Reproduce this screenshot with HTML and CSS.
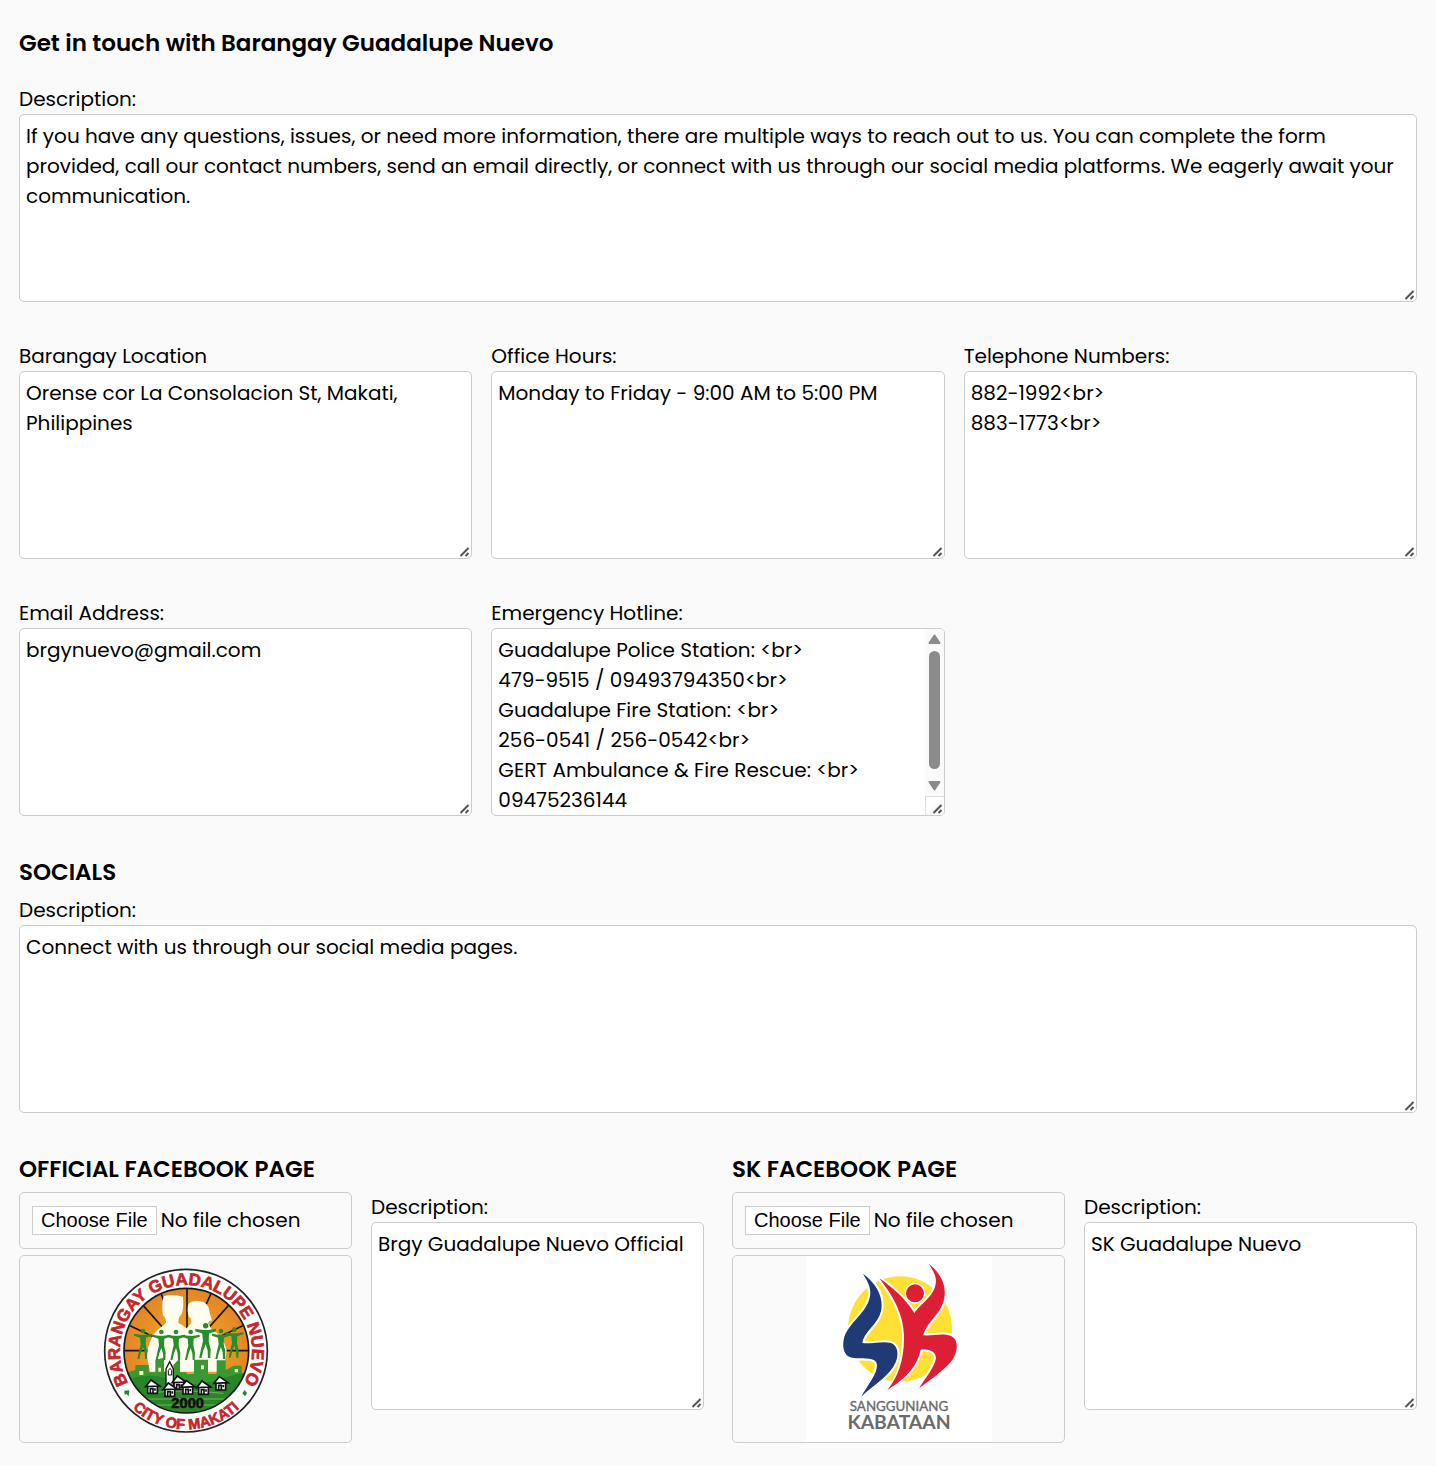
FILE: index.html
```html
<!DOCTYPE html>
<html lang="en">
<head>
<meta charset="utf-8">
<meta name="viewport" content="width=device-width, initial-scale=1">
<title>Contact Page Settings</title>
<link rel="stylesheet" href="styles.css">
</head>
<body>
<form class="contact-form">
  <h2 class="heading heading-main">Get in touch with Barangay Guadalupe Nuevo</h2>

  <div class="field">
    <label for="contact-desc">Description:</label>
    <textarea id="contact-desc">If you have any questions, issues, or need more information, there are multiple ways to reach out to us. You can complete the form provided, call our contact numbers, send an email directly, or connect with us through our social media platforms. We eagerly await your communication.</textarea>
  </div>

  <div class="details">
    <div class="field">
      <label for="location">Barangay Location</label>
      <textarea id="location">Orense cor La Consolacion St, Makati, Philippines</textarea>
    </div>
    <div class="field">
      <label for="hours">Office Hours:</label>
      <textarea id="hours">Monday to Friday - 9:00 AM to 5:00 PM</textarea>
    </div>
    <div class="field">
      <label for="phones">Telephone Numbers:</label>
      <textarea id="phones">882-1992&lt;br&gt;
883-1773&lt;br&gt;</textarea>
    </div>
    <div class="field">
      <label for="email">Email Address:</label>
      <textarea id="email">brgynuevo@gmail.com</textarea>
    </div>
    <div class="field">
      <label for="hotline">Emergency Hotline:</label>
      <div class="scroll-box">
        <textarea id="hotline" class="scrolling">Guadalupe Police Station: &lt;br&gt;
479-9515 / 09493794350&lt;br&gt;
Guadalupe Fire Station: &lt;br&gt;
256-0541 / 256-0542&lt;br&gt;
GERT Ambulance &amp; Fire Rescue: &lt;br&gt;
09475236144</textarea>
        <svg class="scrollbar" viewBox="0 0 19 186" aria-hidden="true">
          <path d="M0 0H19V186H0Z" fill="#fafafa"/>
          <path d="M9.500 6.500L14.500 14H4.500Z" fill="#8b8b8b" stroke="#8b8b8b" stroke-width="2" stroke-linejoin="round"/>
          <rect x="4" y="22" width="11" height="118" rx="5.500" fill="#8b8b8b"/>
          <path d="M9.500 160.500L14.500 153H4.500Z" fill="#8b8b8b" stroke="#8b8b8b" stroke-width="2" stroke-linejoin="round"/>
          <path d="M0.500 186V167.500H19" fill="#fff" stroke="#ddd"/>
          <path d="M8.500 184L16.500 176M13.500 184L16.500 181" fill="none" stroke="#555" stroke-width="2"/>
        </svg>
      </div>
    </div>
  </div>

  <section class="section">
    <h2 class="heading">SOCIALS</h2>
    <div class="field">
      <label for="social-desc">Description:</label>
      <textarea id="social-desc">Connect with us through our social media pages.</textarea>
    </div>
  </section>

  <div class="pages">
    <section class="section">
      <h2 class="heading">OFFICIAL FACEBOOK PAGE</h2>
      <div class="page-row">
        <div class="upload">
          <input class="file" type="file" aria-label="Official page logo">
          <div class="preview">
            <svg class="logo" viewBox="9 3 558 558" role="img" aria-label="Barangay Guadalupe Nuevo seal">
              <defs>
                <path id="arc-top" d="M288 486A198 198 0 0 1 288 90A198 198 0 0 1 288 486"/>
                <path id="arc-bottom" d="M53 288A235 235 0 0 0 523 288"/>
                <clipPath id="disc"><circle cx="289" cy="287" r="186"/></clipPath>
                <radialGradient id="glow"><stop offset="0" stop-color="#f3b51f"/><stop offset="1" stop-color="#e38428"/></radialGradient>
                <g id="person">
                  <circle cx="0" cy="-44" r="7"/>
                  <path d="M-27-36L-8-33H8L27-36V-30L9-24L8-4L13 18L12 40H6L5 20L0 4L-6 20L-11 40H-17L-12 16L-7-4L-9-24L-27-30Z"/>
                </g>
                <g id="house" stroke="#111" stroke-width="5" fill="#fff">
                  <path d="M-14 0V22H15V0"/><path d="M-20 2L-4-18L22 0Z"/><path d="M-6 22V8H2V22M8 7V14" fill="none"/>
                </g>
              </defs>
              <circle cx="288" cy="287" r="244" fill="#fff" stroke="#222" stroke-width="5"/>
              <g clip-path="url(#disc)">
                <rect x="100" y="98" width="380" height="380" fill="url(#glow)"/>
                <path d="M291 98V260M213 116L250 205M160 152L225 225M120 212L200 250M102 287H200M363 116L320 210M415 152L350 225M458 212L380 250M480 287H380" stroke="#1c1607" stroke-width="5"/>
                <path d="M221 124Q246 116 279 125Q282 160 275 177Q264 188 265 203L290 220L303 205L302 190Q290 184 294 150Q300 136 328 138Q356 142 358 168Q362 185 366 196Q358 196 354 205L366 224Q398 240 410 285L400 350H180L170 300Q180 240 210 219L228 204Q229 191 219 181Q214 150 221 124Z" fill="#fffef0"/>
                <path d="M100 355L136 345V330H176V352H196V314L222 308V350H250V330L270 310V352H290V357H312V314H354V357H380V316H407V345L432 332H455V356H480V480H100Z" fill="#3a9833"/>
                <path d="M110 374Q180 350 240 374T360 380T480 350V480H110Z" fill="#298528"/>
                <path d="M148 348h12v12h-12zM205 338h8v12h-8zM333 331h9v12h-9zM434 342h10v10h-10z" fill="#eff3b6"/>
                <g fill="#288e2c">
                  <use href="#person" x="159" y="272"/><use href="#person" x="214" y="275"/><use href="#person" x="258" y="275"/><use href="#person" x="302" y="275"/><use href="#person" x="393" y="272"/><use href="#person" x="433" y="268"/>
                  <use href="#person" transform="translate(347 263) scale(1.15)"/>
                </g>
                <path d="M182 415Q260 400 400 415M170 432H405M190 450H390" stroke="#76b45b" stroke-width="3" fill="none"/>
                <path d="M228 400V342L239 320L250 342V390" fill="#fff" stroke="#151515" stroke-width="4"/><path d="M235 360V346L240 340L245 346V360Z" fill="#fff" stroke="#111" stroke-width="3"/>
                <use href="#house" x="187" y="393"/><use href="#house" x="266" y="381"/><use href="#house" x="239" y="402"/><use href="#house" x="293" y="395"/><use href="#house" x="340" y="396"/><use href="#house" x="392" y="383"/>
              </g>
              <circle cx="289" cy="287" r="187" fill="none" stroke="#171717" stroke-width="5"/>
              <g class="seal-text">
                <text class="seal-name"><textPath href="#arc-top" startOffset="50%">BARANGAY GUADALUPE NUEVO</textPath></text>
                <text class="seal-city"><textPath href="#arc-bottom" startOffset="50%">CITY OF MAKATI</textPath></text>
                <text class="seal-year" x="293" y="460">2000</text>
              </g>
              <path d="M103 407L118 406L116 424L110 417L104 419ZM464 405L471 414L465 424L457 415Z" fill="#27813b"/>
            </svg>
          </div>
        </div>
        <div class="field">
          <label for="official-desc">Description:</label>
          <textarea id="official-desc">Brgy Guadalupe Nuevo Official</textarea>
        </div>
      </div>
    </section>

    <section class="section">
      <h2 class="heading">SK FACEBOOK PAGE</h2>
      <div class="page-row">
        <div class="upload">
          <input class="file" type="file" aria-label="SK page logo">
          <div class="preview">
            <svg class="logo logo-white" viewBox="18 3 558 558" role="img" aria-label="Sangguniang Kabataan logo">
              <ellipse cx="300" cy="222" rx="156" ry="158" fill="#ffe135"/>
              <g stroke="#fff" stroke-width="12" stroke-linejoin="round">
                <path id="sk-s" d="M189 56C224 82 246 116 245 153C243 205 194 224 187 264C218 268 246 257 273 264C294 272 297 299 287 322C270 363 220 390 184 425C201 391 232 359 231 329C227 302 183 316 151 307C132 299 127 279 131 254C141 202 210 171 211 113C211 91 199 73 189 56Z"/>
                <path id="sk-k" d="M238 70C279 98 317 132 343 174C367 140 405 125 408 78C408 59 396 42 386 26C418 51 437 84 434 121C428 179 382 194 370 241C403 244 446 228 465 253C479 280 463 312 442 332C416 357 385 378 357 400C374 371 404 338 408 309C407 287 385 282 362 284C350 342 307 376 262 405C295 366 313 310 312 246C312 177 277 121 238 70Z"/>
              </g>
              <use href="#sk-s" fill="#203a75"/>
              <use href="#sk-k" fill="#dd1f35"/>
              <circle cx="345" cy="115" r="31" fill="#fff"/><circle cx="345" cy="115" r="27" fill="#dd1f35"/>
              <g class="sk-text">
                <text class="sk-small" x="297" y="468">SANGGUNIANG</text>
                <text class="sk-large" x="297" y="521">KABATAAN</text>
              </g>
            </svg>
          </div>
        </div>
        <div class="field">
          <label for="sk-desc">Description:</label>
          <textarea id="sk-desc">SK Guadalupe Nuevo</textarea>
        </div>
      </div>
    </section>
  </div>
</form>
</body>
</html>
```
FILE: styles.css
```css
* {
  box-sizing: border-box;
}

body {
  margin: 0;
  background: #fafafa;
  color: #000;
  font: 20px/30px Poppins, Inter, sans-serif;
}

.contact-form {
  display: flex;
  flex-direction: column;
  gap: 39px;
  padding: 26px 19px 23px;
}

.heading {
  margin: 0;
  font-size: 23px;
  line-height: 34px;
  font-weight: 600;
}

.heading-main {
  margin-bottom: -15px;
}

.section {
  display: flex;
  flex-direction: column;
  gap: 6px;
}

.field {
  display: flex;
  flex-direction: column;
  min-width: 0;
}

textarea {
  display: block;
  width: 100%;
  height: 188px;
  margin: 0;
  padding: 6px;
  border: 1px solid #ccc;
  border-radius: 5px;
  background: #fff url("data:image/svg+xml,%3Csvg xmlns='http://www.w3.org/2000/svg' width='12' height='12'%3E%3Cpath d='M1.500 10L9.500 2M6.500 10L9.500 7' stroke='%23555' stroke-width='2' fill='none'/%3E%3C/svg%3E") right bottom no-repeat;
  color: #000;
  font: inherit;
  resize: both;
}

textarea::-webkit-resizer {
  display: none;
}

.details {
  display: grid;
  grid-template-columns: repeat(3, 1fr);
  gap: 39px 19px;
}

.scroll-box {
  position: relative;
}

.scrolling {
  padding-right: 24px;
  scrollbar-width: none;
}

.scrollbar {
  position: absolute;
  top: 1px;
  right: 1px;
  width: 19px;
  height: 186px;
  border-radius: 0 4px 4px 0;
  pointer-events: none;
}

.pages {
  display: grid;
  grid-template-columns: repeat(2, 1fr);
  gap: 28px;
}

.page-row {
  display: grid;
  grid-template-columns: repeat(2, 1fr);
  gap: 19px;
}

.upload {
  display: flex;
  flex-direction: column;
  gap: 6px;
  min-width: 0;
}

.file {
  width: 100%;
  height: 57px;
  padding: 12px;
  border: 1px solid #ccc;
  border-radius: 5px;
  color: #000;
  font: inherit;
}

.file::file-selector-button {
  margin-right: 4px;
  padding: 2px 8px;
  border: 1px solid #ccc;
  background: #fff;
  color: #000;
  font: 20px "Liberation Sans", Arial, sans-serif;
}

.preview {
  display: flex;
  justify-content: center;
  border: 1px solid #ccc;
  border-radius: 5px;
}

.logo {
  display: block;
  width: 186px;
  height: 186px;
}

.logo-white {
  background: #fff;
}

.seal-text {
  font-family: "Liberation Sans", Arial, sans-serif;
  font-weight: 700;
  text-anchor: middle;
  fill: #c5262b;
  stroke: #c5262b;
  stroke-width: 2px;
}

.seal-name {
  font-size: 51px;
}

.seal-city {
  font-size: 44px;
}

.seal-year {
  font-size: 44px;
  fill: #111;
  stroke: #111;
}

.sk-text {
  font-family: Lato, sans-serif;
  text-anchor: middle;
  fill: #6b6b6b;
}

.sk-small {
  font-size: 40px;
  stroke: #6b6b6b;
}

.sk-large {
  font-size: 58px;
  font-weight: 700;
}
```
